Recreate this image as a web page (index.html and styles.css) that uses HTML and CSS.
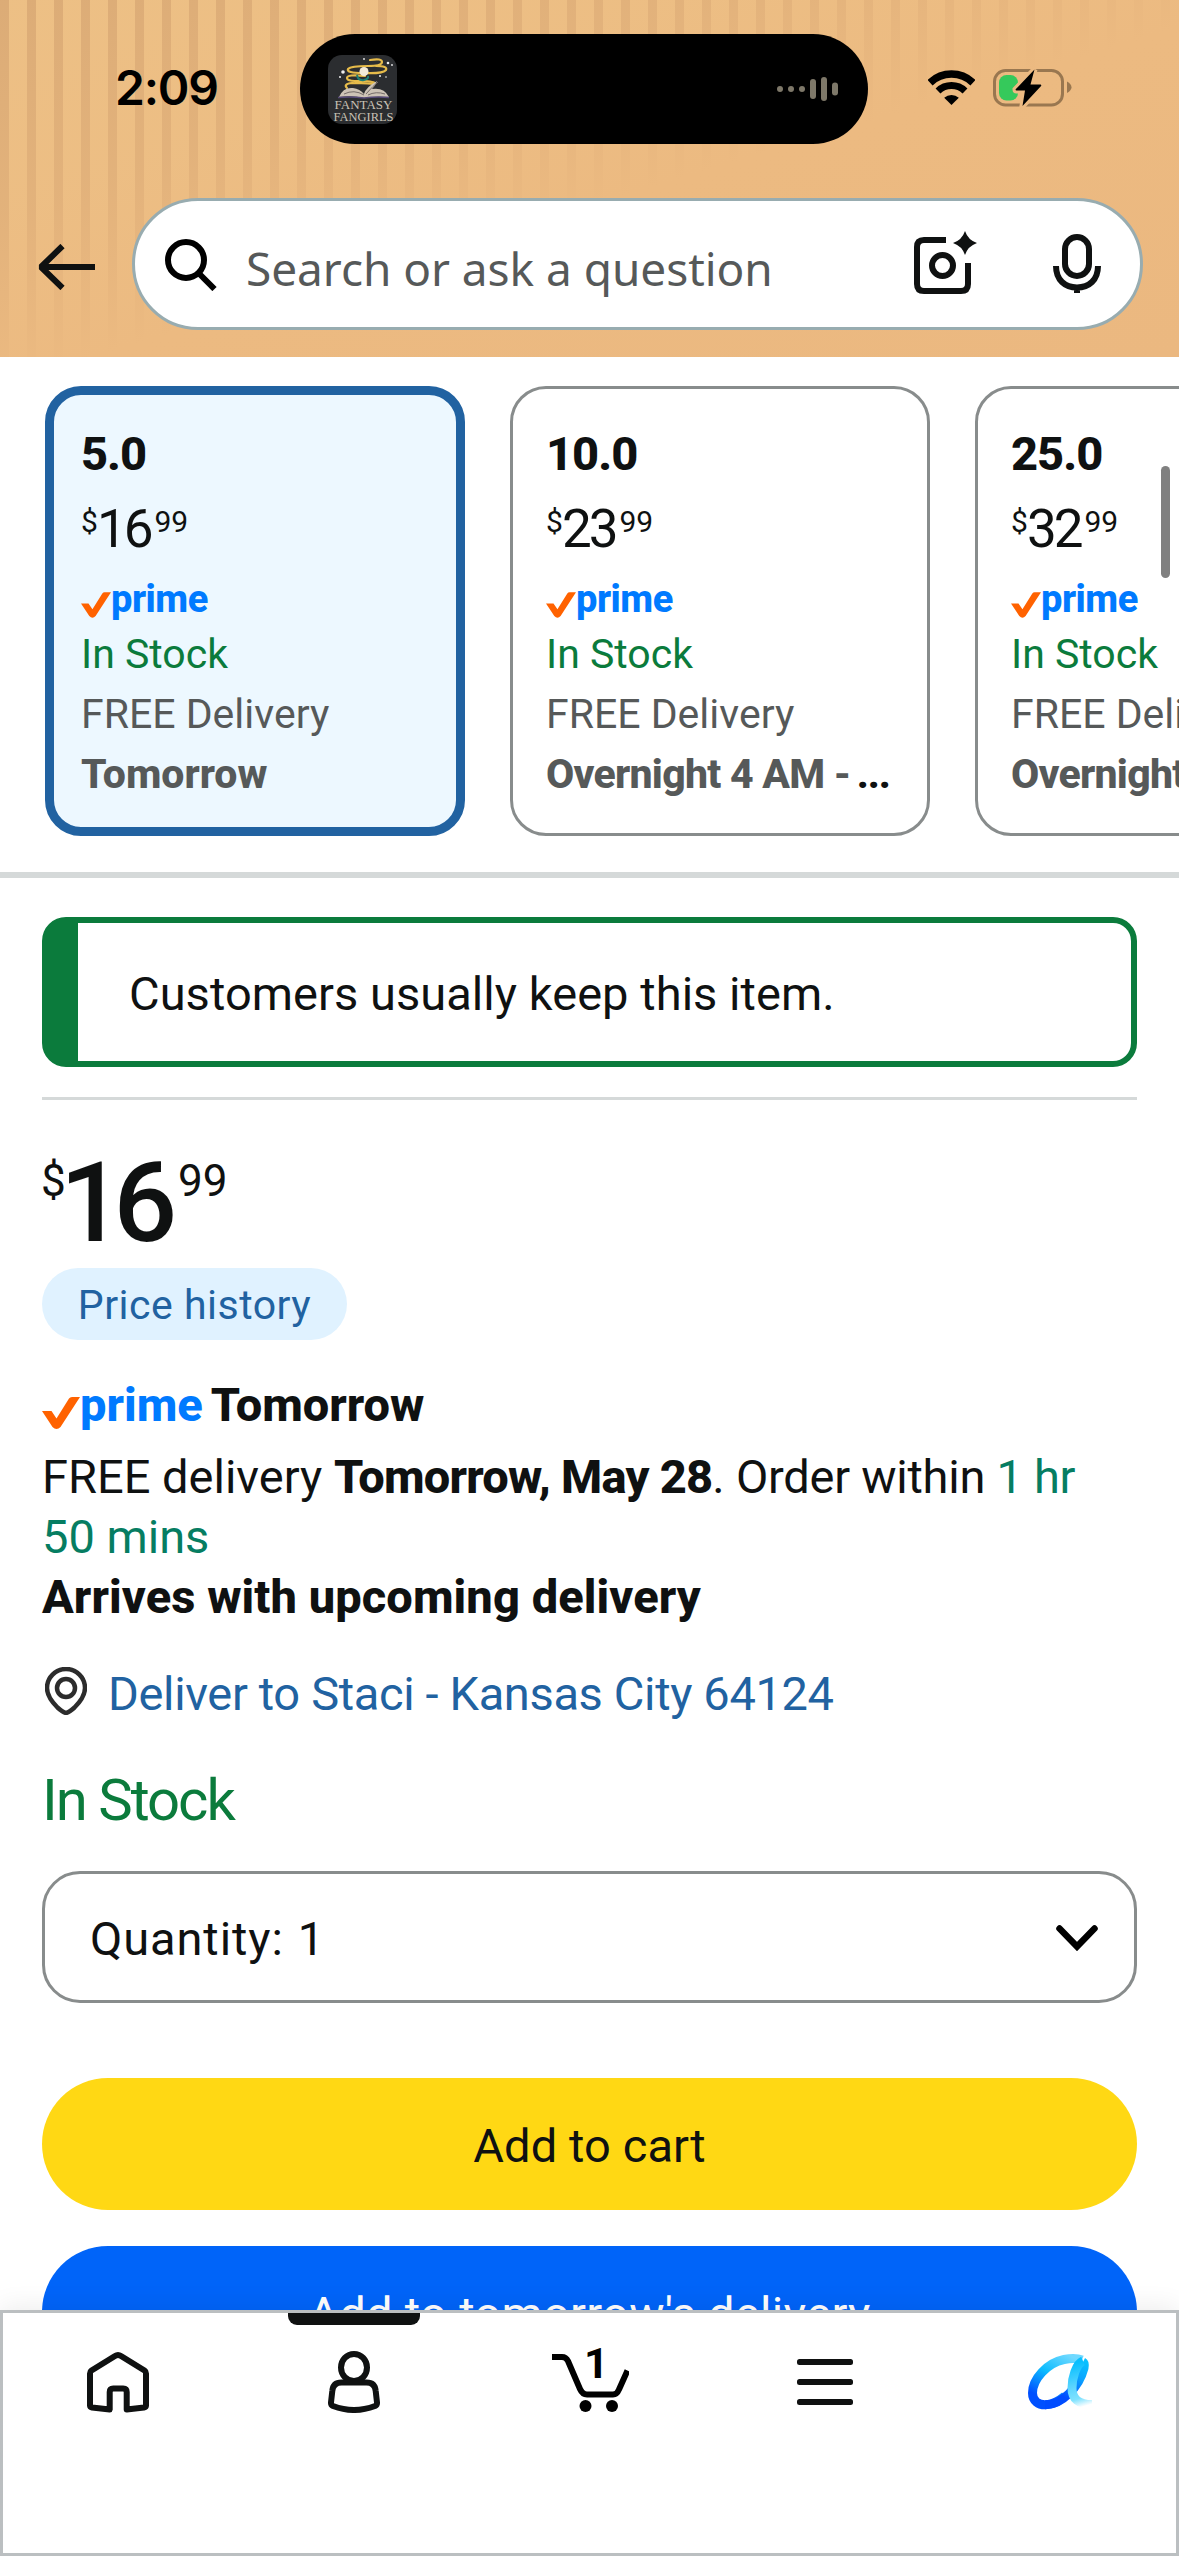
FILE: index.html
```html
<!DOCTYPE html>
<html lang="en">
<head>
<meta charset="utf-8">
<title>Product details</title>
<link rel="stylesheet" href="styles.css">
</head>
<body>
<svg class="defs" width="0" height="0" aria-hidden="true">
  <symbol id="check" viewBox="0 0 38 32"><path d="M0 14h9.500l5 7.500L27 1.500Q28 0 30 0H38L18.500 30q-4 4-8 0z" fill="#ff6200"/></symbol>
</svg>
<div class="screen">
  <header class="header">
    <div class="status">
      <div class="time">2:09</div>
      <div class="island">
        <svg class="art" width="69" height="69" viewBox="0 0 69 69">
          <rect width="69" height="69" rx="14" fill="#2b2d30"/>
          <g fill="none" stroke="#e6bb4a" stroke-linecap="round">
            <path d="M42 5q12-2 12 2t-14 4q-17 0-20 3-2 4 15 4 20 1 23-3 2-4-10-4" stroke-width="2.200"/>
            <path d="M37 21q-18-2-18 2t18 3q12 1 9 3-14-1-22-1-9 1-5 5" stroke-width="2.200"/>
          </g>
          <circle cx="36" cy="16.500" r="4.500" fill="#f3ead9"/>
          <path d="M29 20q1 6 7 5 5-1 4-4" fill="none" stroke="#1e7f74" stroke-width="2"/>
          <path d="M11 42q4-10 14-9 7 1 11 6 2-7 13-13-2 5-5 8 12-2 17 8-13-1-25 1-12-3-25-1z" fill="#cdc3b6"/>
          <path d="M16 39q10-5 20 1M38 39q8-9 12-12M40 40q8-4 17-1" fill="none" stroke="#746b68"/>
          <path d="M10 42.500q14-1 26 .5 12-1.500 25-.5" fill="none" stroke="#574a78" stroke-width="1.500"/>
          <g fill="#eee"><circle cx="15" cy="17" r="1.800"/><circle cx="36" cy="4" r=".9"/><circle cx="60" cy="8" r="1.300"/><circle cx="12" cy="22" r="1"/><circle cx="52" cy="21" r="1"/><circle cx="64" cy="10" r=".9"/><circle cx="58" cy="22" r=".8"/></g>
          <g class="art-title" fill="#c9c2b6"><text x="6.500" y="54" textLength="58" lengthAdjust="spacingAndGlyphs">FANTASY</text><text x="5.500" y="66" textLength="60" lengthAdjust="spacingAndGlyphs">FANGIRLS</text></g>
        </svg>
        <svg class="wave" width="62" height="26" viewBox="0 0 62 26" fill="#7e7869">
          <circle cx="3" cy="13" r="3"/><circle cx="14" cy="13" r="3"/><circle cx="25" cy="13" r="3"/>
          <rect x="33" y="3" width="6" height="20" rx="3"/><rect x="44" y="1" width="6" height="24" rx="3"/><rect x="55" y="6.500" width="6" height="13" rx="3"/>
        </svg>
      </div>
      <div class="signals">
        <svg width="47" height="36" viewBox="0 0 47 36" fill="none" stroke="#000">
          <path d="M2 12.700a31 31 0 0 1 43 0" stroke-width="7.500"/><path d="M10 21a19.500 19.500 0 0 1 27 0" stroke-width="7"/><path d="M23.500 35l-7.300-7.300a11 11 0 0 1 14.600 0z" fill="#000" stroke="none"/>
        </svg>
        <svg width="79" height="38" viewBox="0 0 79 38">
          <rect x="1.500" y="1.500" width="68" height="34.500" rx="11" fill="none" stroke="#997750" stroke-width="3"/>
          <path d="M74 12.500q4.500 2.500 4.500 5.750t-4.500 5.750z" fill="#997750"/>
          <rect x="6" y="6" width="19" height="25.500" rx="7.500" fill="#35c95b"/>
          <path d="M41.500 0.500L22.500 20.500Q22.500 21.500 23.500 21.500H32L29.500 37L48.300 16.800Q48.300 15.500 47.500 15.500H37.500Z" fill="#000" stroke="#ecba82" stroke-width="6" paint-order="stroke"/>
        </svg>
      </div>
    </div>
    <div class="search-row">
      <svg class="back" width="57" height="46" viewBox="0 0 57 46" fill="none" stroke="#0f1111" stroke-width="6"><path d="M57 23H3M24.500 2L3 23l21.500 21" stroke-linejoin="bevel"/></svg>
      <div class="search">
        <svg class="glass" width="52" height="52" viewBox="0 0 52 52" fill="none" stroke="#000" stroke-width="6"><circle cx="21" cy="21" r="18"/><path d="M34 34.500L49.500 50"/></svg>
        <span class="placeholder">Search or ask a question</span>
        <svg class="lens" width="64" height="66" viewBox="0 0 64 66" fill="none" stroke="#0f1111" stroke-width="6"><path d="M32 10H10q-7 0-7 7v37q0 7 7 7h37q7 0 7-7V33"/><circle cx="28.500" cy="35.500" r="10.500"/><path d="M51 1q3 9 12 12-9 3-12 12-3-9-12-12 9-3 12-12z" fill="#0f1111" stroke="none"/></svg>
        <svg class="mic" width="48" height="60" viewBox="0 0 48 60" fill="none" stroke="#0f1111" stroke-width="6"><rect x="12" y="3" width="24" height="39" rx="12"/><path d="M3 32c0 14 9 21.500 21 21.500S45 46 45 32M24 53v6"/></svg>
      </div>
    </div>
  </header>

  <main class="main">
    <section class="options">
      <article class="card selected">
        <div class="size">5.0</div>
        <div class="price"><span class="sym">$</span><span class="whole">16</span><span class="cents">99</span></div>
        <div class="prime"><svg width="30" height="26"><use href="#check"/></svg><b>prime</b></div>
        <div class="stock">In Stock</div>
        <div class="ship">FREE Delivery</div>
        <div class="ship"><b>Tomorrow</b></div>
      </article>
      <article class="card">
        <div class="size">10.0</div>
        <div class="price"><span class="sym">$</span><span class="whole">23</span><span class="cents">99</span></div>
        <div class="prime"><svg width="30" height="26"><use href="#check"/></svg><b>prime</b></div>
        <div class="stock">In Stock</div>
        <div class="ship">FREE Delivery</div>
        <div class="ship"><b class="tight">Overnight 4 AM - <span class="dots">...</span></b></div>
      </article>
      <article class="card">
        <div class="size">25.0</div>
        <div class="price"><span class="sym">$</span><span class="whole">32</span><span class="cents">99</span></div>
        <div class="prime"><svg width="30" height="26"><use href="#check"/></svg><b>prime</b></div>
        <div class="stock">In Stock</div>
        <div class="ship">FREE Delivery</div>
        <div class="ship"><b class="tight">Overnight 4 AM - <span class="dots">...</span></b></div>
      </article>
    </section>
    <div class="scroll-thumb"></div>

    <section class="buy">
      <div class="notice">Customers usually keep this item.</div>
      <hr class="rule">
      <div class="price big"><span class="sym">$</span><span class="whole">16</span><span class="cents">99</span></div>
      <div class="pill">Price history</div>
      <div class="prime large"><svg width="38" height="32"><use href="#check"/></svg><b>prime</b><strong>Tomorrow</strong></div>
      <div class="delivery">
        <div>FREE delivery <b class="date">Tomorrow, May 28</b><span class="order">. Order within </span><span class="count hour">1 hr</span></div>
        <div class="count">50 mins</div>
        <div><b class="arrives">Arrives with upcoming delivery</b></div>
      </div>
      <div class="address">
        <svg width="42" height="48" viewBox="0 0 42 48" fill="none" stroke="#2c2c2c" stroke-width="4.500"><path d="M21 2C10.500 2 2 10.500 2 21c0 8 5 14 10.500 19.500Q18 45.500 21 46q3-.5 8.500-5.500C35 35 40 29 40 21 40 10.500 31.500 2 21 2z"/><circle cx="21" cy="21" r="9"/></svg>
        <span>Deliver to Staci - Kansas City 64124</span>
      </div>
      <div class="availability">In Stock</div>
      <div class="select">
        <span class="label">Quantity:</span><span class="qty">1</span>
        <svg width="42" height="28" viewBox="0 0 42 28" fill="none" stroke="#000" stroke-width="6.500" stroke-linecap="round"><path d="M3.500 3.500L21 21.500 38.500 3.500"/></svg>
      </div>
      <div class="btn cart">Add to cart</div>
      <div class="btn add">Add to tomorrow's delivery</div>
    </section>
  </main>

  <nav class="nav">
    <div class="tab"><svg width="62" height="62" viewBox="0 0 62 62" fill="none" stroke="#0f1111" stroke-width="6" stroke-linejoin="round"><path d="M22.700 58.500V41q0-3.500 3.500-3.500h10q3.500 0 3.500 3.500v17.500L57 56.500q2-.4 2-2V22.500q0-2-1.500-3L34 5q-3-2-6 0L4.500 19.500Q3 20.500 3 22.500v32q0 1.600 2 2z"/></svg></div>
    <div class="tab active"><svg width="54" height="62" viewBox="0 0 54 62" fill="none" stroke="#0f1111" stroke-width="6"><ellipse cx="27" cy="16.500" rx="13" ry="13.500"/><path d="M14.500 31.500h25q8.500 0 9.200 8.500l1.300 11.500q.2 2.500-2 3.500-21 8-42 0-2.200-1-2-3.500L5.300 40q.7-8.500 9.200-8.500z"/></svg></div>
    <div class="tab"><svg width="80" height="68" viewBox="0 0 80 68" fill="none" stroke="#000" stroke-width="6"><path d="M3 12h10q4 0 6 4l12 28q2.500 5.500 7 5.500h26q4 0 6-5l8.500-19" stroke-linecap="butt"/><circle cx="36.500" cy="61" r="6" fill="#000" stroke="none"/><circle cx="63" cy="61" r="6" fill="#000" stroke="none"/><text class="badge" x="35" y="33" fill="#000" stroke="none">1</text></svg></div>
    <div class="tab"><svg width="56" height="48" viewBox="0 0 56 48" fill="#0f1111"><rect y="0" width="56" height="6" rx="2.500"/><rect y="20" width="56" height="6" rx="2.500"/><rect y="40" width="56" height="6" rx="2.500"/></svg></div>
    <div class="tab"><svg width="66" height="56" viewBox="0 0 66 56" fill="none" stroke-width="9">
      <defs>
        <linearGradient id="loop" gradientUnits="userSpaceOnUse" x1="46" y1="4" x2="18" y2="53"><stop offset="0" stop-color="#70d9ff"/><stop offset=".45" stop-color="#0cbcff"/><stop offset=".9" stop-color="#0050ff"/></linearGradient>
        <linearGradient id="stem" gradientUnits="userSpaceOnUse" x1="57" y1="8" x2="38" y2="44"><stop offset="0" stop-color="#08c0ff"/><stop offset=".4" stop-color="#0aa5ff"/><stop offset="1" stop-color="#004cff"/></linearGradient>
        <linearGradient id="tail" gradientUnits="userSpaceOnUse" x1="52" y1="8" x2="64" y2="50"><stop offset="0" stop-color="#08bfff"/><stop offset=".55" stop-color="#62d7ff"/><stop offset=".8" stop-color="#7fe2ff"/><stop offset="1" stop-color="#7fe2ff" stop-opacity="0"/></linearGradient>
      </defs>
      <path d="M54 6C49 4 41 4.500 36 5.500 19 9 4.500 25 4.500 39c0 8 6 12 13 11.800Q27 50.500 37 42" stroke="url(#loop)"/>
      <path d="M17 50.800C34 51 51 33 56 14q1-5-1-6" stroke="url(#stem)"/>
      <path d="M55 7C48 10 44 24 44 34q0 16.500 20 16.500" stroke="url(#tail)"/>
    </svg></div>
  </nav>
</div>
</body>
</html>
```
FILE: styles.css
```css
* { box-sizing: border-box; }
body { margin: 0; background: #fff; font-family: Roboto, sans-serif; font-size: 47px; font-weight: 430; line-height: 60px; color: #0f1111; }
b, strong { font-weight: 800; }
svg { display: block; flex: none; }
.defs { position: absolute; }
.screen { width: 1179px; height: 2556px; display: flex; flex-direction: column; overflow: hidden; background: #fff; }

/* header */
.header {
  flex: none; height: 357px;
  background:
    linear-gradient(to bottom right, rgba(236,187,130,.05) 0, rgba(236,187,130,.45) 30%, #ecba81 54%, #ebb880 100%),
    repeating-linear-gradient(90deg, #dbab76 0 9px, #edc085 9px 27px);
}
.status { height: 198px; display: grid; grid-template-columns: 300px 568px 1fr; padding-top: 34px; }
.time { padding-left: 115px; line-height: 107px; font-family: Inter, sans-serif; font-size: 48px; font-weight: 600; letter-spacing: -1.2px; color: #000; }
.island { height: 110px; border-radius: 55px; background: #000; display: flex; align-items: center; justify-content: space-between; padding: 0 29px 0 28px; }
.art-title { font-family: "Liberation Serif", serif; font-size: 13px; font-weight: 400; }
.signals { height: 107px; display: flex; align-items: center; gap: 18px; padding-left: 60px; }
.search-row { display: flex; align-items: center; gap: 37px; padding-left: 38px; }
.back { margin-top: 6px; }
.search { width: 1011px; height: 132px; border: 3px solid #98acb0; border-radius: 66px; background: #fff; display: flex; align-items: center; padding: 0 39px 0 30px; }
.glass { margin-top: 2px; }
.placeholder { flex: 1; margin: 8px 0 0 29px; font-family: "Noto Sans", sans-serif; font-size: 46px; letter-spacing: -.05px; white-space: nowrap; color: #565959; }
.lens { margin-right: 75px; margin-top: -2px; }

/* size options */
.main { flex: 1; min-height: 0; overflow: hidden; position: relative; }
.options { display: flex; gap: 45px; height: 521px; padding: 29px 0 0 45px; border-bottom: 6px solid #d5d9d9; overflow: hidden; }
.card { flex: none; width: 420px; height: 450px; border: 3px solid #888c8c; border-radius: 36px; padding: 35px 12px 0 33px; white-space: nowrap; font-size: 41px; }
.card.selected { border: 9px solid #2162a1; padding: 29px 20px 0 27px; background: #edf8ff; }
.size { font-size: 47px; font-weight: 800; letter-spacing: -1px; }
.price { display: flex; height: 76px; margin: 7px 0 0; }
.sym, .cents { font-size: 30px; line-height: 62px; }
.whole { font-size: 53px; line-height: 76px; letter-spacing: -3px; margin: 0 4px 0 -1px; }
.prime { display: flex; height: 57px; color: #007aff; font-size: 38px; line-height: 65px; letter-spacing: -.5px; }
.prime svg { margin-top: 25px; }
.stock { color: #0b7b3c; }
.ship { color: #565959; }
.tight { letter-spacing: -.75px; }
.dots { color: #0f1111; margin-left: -3px; letter-spacing: -1.2px; }
.scroll-thumb { position: absolute; top: 109px; right: 9px; width: 9px; height: 112px; border-radius: 5px; background: #808080; }

/* buy box */
.buy { display: flex; flex-direction: column; padding: 39px 42px 0; white-space: nowrap; }
.notice { flex: none; height: 150px; border: 6px solid #0b7b3c; border-left-width: 36px; border-radius: 24px; padding: 41px 0 0 51px; letter-spacing: .05px; }
.rule { width: 100%; height: 3px; margin: 30px 0 40px; border: 0; background: #d5d9d9; }
.price.big { height: 128px; margin: 0; }
.big .sym, .big .cents { font-size: 44px; line-height: 82px; }
.big .sym { margin-left: -1px; }
.big .whole { font-size: 112px; font-weight: 480; line-height: 126px; letter-spacing: -10px; margin: 0 11px 0 -6px; }
.pill { align-self: flex-start; height: 72px; width: 305px; border-radius: 36px; background: #e0f2ff; color: #2162a1; font-size: 41px; line-height: 74px; letter-spacing: .5px; text-align: center; }
.prime.large { height: 60px; margin-top: 35px; font-size: 47px; line-height: 60px; letter-spacing: 0; }
.large svg { margin-top: 22px; }
.large strong { margin-left: 8px; color: #0f1111; }
.delivery { margin-top: 12px; }
.date { letter-spacing: -.75px; }
.order { letter-spacing: -.25px; }
.count { color: #067d62; }
.hour { letter-spacing: -.3px; }
.arrives { letter-spacing: .08px; }
.address { display: flex; gap: 21px; padding-left: 3px; margin-top: 37px; color: #2162a1; letter-spacing: -.35px; }
.address svg { margin-top: 3px; }
.availability { margin-top: 41px; font-size: 58px; line-height: 70px; letter-spacing: -2px; color: #0b7b3c; }
.select { margin-top: 36px; height: 132px; border: 3px solid #888c8c; border-radius: 38px; display: flex; align-items: center; padding: 3px 36px 0 45px; }
.label { letter-spacing: .9px; }
.qty { flex: 1; margin-left: 14px; }
.btn { flex: none; height: 132px; border-radius: 66px; padding-top: 2px; line-height: 132px; text-align: center; }
.cart { margin-top: 75px; background: #ffd814; letter-spacing: .1px; }
.add { margin-top: 36px; background: #0064f9; color: #fff; letter-spacing: .3px; }

/* bottom navigation */
.nav { flex: none; position: relative; height: 246px; display: grid; grid-template-columns: repeat(5, 1fr); background: #fff; box-shadow: inset 0 0 0 3px #bbbfc1, 0 -4px 24px rgba(0,0,0,.07); }
.tab { display: flex; flex-direction: column; align-items: center; padding-top: 41px; }
.tab:nth-child(3) { padding-top: 35px; }
.tab:nth-child(4) { padding-top: 49px; }
.tab:nth-child(5) { padding-top: 44px; }
.tab.active { padding-top: 0; }
.active::before { content: ""; width: 132px; height: 12px; margin: 3px 0 26px; border-radius: 0 0 9px 9px; background: #0f1111; }
.badge { font-family: Roboto, sans-serif; font-size: 43px; font-weight: 700; }
```
